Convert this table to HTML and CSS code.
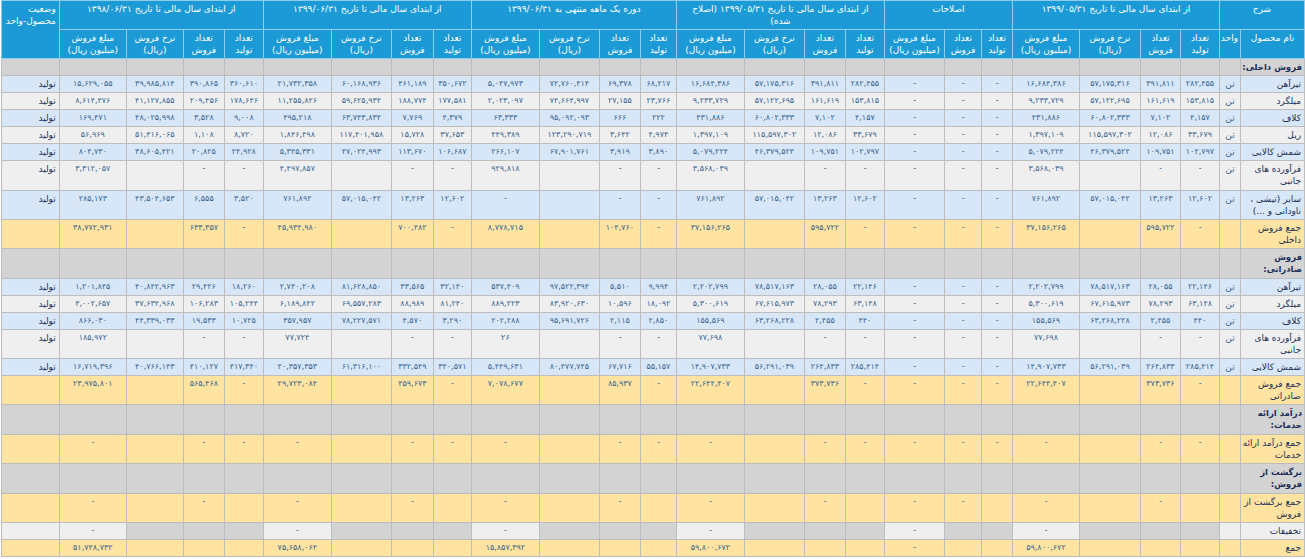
FILE: index.html
```html
<!DOCTYPE html>
<html lang="fa" dir="rtl">
<head>
<meta charset="utf-8">
<title>گزارش فعالیت ماهانه</title>
<link rel="stylesheet" href="styles.css">
</head>
<body>
<table class="tb">
<colgroup>
<col class="c64"><col class="c21">
<col class="c39"><col class="c40"><col class="c61"><col class="c67">
<col class="c31"><col class="c37"><col class="c60">
<col class="c39"><col class="c41"><col class="c60"><col class="c68">
<col class="c36"><col class="c41"><col class="c60"><col class="c68">
<col class="c38"><col class="c42"><col class="c60"><col class="c68">
<col class="c39"><col class="c41"><col class="c57"><col class="c67">
<col class="c58">
</colgroup>
<thead>
<tr class="h1">
<th colspan="2">شرح</th>
<th colspan="4">از ابتدای سال مالی تا تاریخ ۱۳۹۹/۰۵/۳۱</th>
<th colspan="3">اصلاحات</th>
<th colspan="4">از ابتدای سال مالی تا تاریخ ۱۳۹۹/۰۵/۳۱ (اصلاح<br>شده)</th>
<th colspan="4">دوره یک ماهه منتهی به ۱۳۹۹/۰۶/۳۱</th>
<th colspan="4">از ابتدای سال مالی تا تاریخ ۱۳۹۹/۰۶/۳۱</th>
<th colspan="4">از ابتدای سال مالی تا تاریخ ۱۳۹۸/۰۶/۳۱</th>
<th rowspan="2" class="hs">وضعیت<br>محصول-واحد</th>
</tr>
<tr class="h2">
<th>نام محصول</th><th>واحد</th>
<th>تعداد<br>تولید</th><th>تعداد<br>فروش</th><th>نرخ فروش<br>(ریال)</th><th>مبلغ فروش<br>(میلیون ریال)</th>
<th>تعداد<br>تولید</th><th>تعداد<br>فروش</th><th>مبلغ فروش<br>(میلیون ریال)</th>
<th>تعداد<br>تولید</th><th>تعداد<br>فروش</th><th>نرخ فروش<br>(ریال)</th><th>مبلغ فروش<br>(میلیون ریال)</th>
<th>تعداد<br>تولید</th><th>تعداد<br>فروش</th><th>نرخ فروش<br>(ریال)</th><th>مبلغ فروش<br>(میلیون ریال)</th>
<th>تعداد<br>تولید</th><th>تعداد<br>فروش</th><th>نرخ فروش<br>(ریال)</th><th>مبلغ فروش<br>(میلیون ریال)</th>
<th>تعداد<br>تولید</th><th>تعداد<br>فروش</th><th>نرخ فروش<br>(ریال)</th><th>مبلغ فروش<br>(میلیون ریال)</th>
</tr>
</thead>
<tbody>
<tr class="rs"><td class="nm sec">فروش داخلی:</td><td></td><td></td><td></td><td></td><td></td><td></td><td></td><td></td><td></td><td></td><td></td><td></td><td></td><td></td><td></td><td></td><td></td><td></td><td></td><td></td><td></td><td></td><td></td><td></td><td></td></tr>

<tr class="rb"><td class="nm">تیرآهن</td><td class="u">تن</td><td>۲۸۲,۴۵۵</td><td>۳۹۱,۸۱۱</td><td>۵۷,۱۷۵,۳۱۶</td><td>۱۶,۶۸۴,۳۸۶</td><td>-</td><td>-</td><td>-</td><td>۲۸۲,۴۵۵</td><td>۳۹۱,۸۱۱</td><td>۵۷,۱۷۵,۳۱۶</td><td>۱۶,۶۸۴,۳۸۶</td><td>۶۸,۲۱۷</td><td>۶۹,۳۷۸</td><td>۷۲,۷۶۰,۴۱۴</td><td>۵,۰۴۷,۹۷۳</td><td>۳۵۰,۶۷۲</td><td>۴۶۱,۱۸۹</td><td>۶۰,۱۶۸,۹۳۶</td><td>۲۱,۷۳۲,۳۵۸</td><td>۳۶۰,۶۱۰</td><td>۳۹۰,۸۶۵</td><td>۳۹,۹۸۵,۸۱۴</td><td>۱۵,۶۲۹,۰۵۵</td><td class="st">تولید</td></tr>

<tr class="rg"><td class="nm">میلگرد</td><td class="u">تن</td><td>۱۵۳,۸۱۵</td><td>۱۶۱,۶۱۹</td><td>۵۷,۱۲۲,۶۹۵</td><td>۹,۲۳۳,۷۲۹</td><td>-</td><td>-</td><td>-</td><td>۱۵۳,۸۱۵</td><td>۱۶۱,۶۱۹</td><td>۵۷,۱۲۲,۶۹۵</td><td>۹,۲۳۳,۷۲۹</td><td>۲۳,۷۶۶</td><td>۲۷,۱۵۵</td><td>۷۴,۶۶۴,۹۹۷</td><td>۲,۰۲۳,۰۹۷</td><td>۱۷۷,۵۸۱</td><td>۱۸۸,۷۷۴</td><td>۵۹,۶۲۵,۹۳۴</td><td>۱۱,۲۵۵,۸۲۶</td><td>۱۷۸,۶۴۶</td><td>۲۰۹,۴۵۶</td><td>۴۱,۱۲۷,۸۵۵</td><td>۸,۶۱۴,۴۷۶</td><td class="st">تولید</td></tr>

<tr class="rb"><td class="nm">کلاف</td><td class="u">تن</td><td>۴,۱۵۷</td><td>۷,۱۰۲</td><td>۶۰,۸۰۲,۳۳۳</td><td>۴۳۱,۸۸۶</td><td>-</td><td>-</td><td>-</td><td>۴,۱۵۷</td><td>۷,۱۰۲</td><td>۶۰,۸۰۲,۳۳۳</td><td>۴۳۱,۸۸۶</td><td>۲۲۲</td><td>۶۶۶</td><td>۹۵,۰۹۲,۰۹۳</td><td>۶۳,۳۳۳</td><td>۴,۳۷۹</td><td>۷,۷۶۹</td><td>۶۳,۷۴۳,۸۳۴</td><td>۴۹۵,۲۱۸</td><td>۹,۰۰۸</td><td>۳,۵۲۸</td><td>۴۸,۰۲۵,۹۹۸</td><td>۱۶۹,۴۷۱</td><td class="st">تولید</td></tr>

<tr class="rg"><td class="nm">ریل</td><td class="u">تن</td><td>۳۳,۶۷۹</td><td>۱۲,۰۸۶</td><td>۱۱۵,۵۹۷,۳۰۲</td><td>۱,۳۹۷,۱۰۹</td><td>-</td><td>-</td><td>-</td><td>۳۳,۶۷۹</td><td>۱۲,۰۸۶</td><td>۱۱۵,۵۹۷,۳۰۲</td><td>۱,۳۹۷,۱۰۹</td><td>۴,۹۷۴</td><td>۳,۶۴۲</td><td>۱۲۳,۲۹۰,۷۱۹</td><td>۴۴۹,۳۸۹</td><td>۳۷,۶۵۳</td><td>۱۵,۷۲۸</td><td>۱۱۷,۴۰۱,۹۵۸</td><td>۱,۸۴۶,۴۹۸</td><td>۸,۷۲۰</td><td>۱,۱۰۸</td><td>۵۱,۴۱۶,۰۶۵</td><td>۵۶,۹۶۹</td><td class="st">تولید</td></tr>

<tr class="rb"><td class="nm">شمش کالایی</td><td class="u">تن</td><td>۱۰۲,۷۹۷</td><td>۱۰۹,۷۵۱</td><td>۴۶,۳۷۹,۵۲۴</td><td>۵,۰۷۹,۲۲۴</td><td>-</td><td>-</td><td>-</td><td>۱۰۲,۷۹۷</td><td>۱۰۹,۷۵۱</td><td>۴۶,۳۷۹,۵۲۴</td><td>۵,۰۷۹,۲۲۴</td><td>۳,۸۹۰</td><td>۳,۹۱۹</td><td>۶۷,۹۰۱,۷۶۱</td><td>۲۶۶,۱۰۷</td><td>۱۰۶,۶۸۷</td><td>۱۱۳,۶۷۰</td><td>۴۷,۰۲۴,۹۹۳</td><td>۵,۳۴۵,۳۳۱</td><td>۲۴,۹۲۸</td><td>۲۰,۸۲۵</td><td>۳۸,۶۰۵,۴۲۱</td><td>۸۰۴,۷۳۰</td><td class="st">تولید</td></tr>

<tr class="rg tall"><td class="nm">فرآورده های<br>جانبی</td><td class="u">تن</td><td>-</td><td>-</td><td></td><td>۳,۵۶۸,۰۳۹</td><td>-</td><td>-</td><td>-</td><td>-</td><td>-</td><td></td><td>۳,۵۶۸,۰۳۹</td><td>-</td><td>-</td><td></td><td>۹۲۹,۸۱۸</td><td>-</td><td>-</td><td></td><td>۴,۴۹۷,۸۵۷</td><td>-</td><td>-</td><td></td><td>۳,۳۱۲,۰۵۷</td><td class="st">تولید</td></tr>

<tr class="rb"><td class="nm">سایر (تیشی ،<br>ناودانی و ...)</td><td class="u">تن</td><td>۱۲,۶۰۲</td><td>۱۳,۲۶۳</td><td>۵۷,۰۱۵,۰۴۲</td><td>۷۶۱,۸۹۲</td><td>-</td><td>-</td><td>-</td><td>۱۲,۶۰۲</td><td>۱۳,۲۶۳</td><td>۵۷,۰۱۵,۰۴۲</td><td>۷۶۱,۸۹۲</td><td>-</td><td>-</td><td></td><td>-</td><td>۱۲,۶۰۲</td><td>۱۳,۲۶۳</td><td>۵۷,۰۱۵,۰۴۲</td><td>۷۶۱,۸۹۲</td><td>۳,۵۲۰</td><td>۶,۵۵۵</td><td>۴۳,۵۰۴,۶۵۳</td><td>۲۸۵,۱۷۳</td><td class="st">تولید</td></tr>

<tr class="ry"><td class="nm">جمع فروش<br>داخلی</td><td></td><td>-</td><td>۵۹۵,۷۲۲</td><td></td><td>۳۷,۱۵۶,۲۶۵</td><td>-</td><td>-</td><td>-</td><td>-</td><td>۵۹۵,۷۲۲</td><td></td><td>۳۷,۱۵۶,۲۶۵</td><td>-</td><td>۱۰۴,۷۶۰</td><td></td><td>۸,۷۷۸,۷۱۵</td><td>-</td><td>۷۰۰,۴۸۲</td><td></td><td>۴۵,۹۳۴,۹۸۰</td><td>-</td><td>۶۳۳,۳۵۷</td><td></td><td>۳۸,۷۷۲,۹۳۱</td><td></td></tr>

<tr class="rs tall"><td class="nm sec">فروش<br>صادراتی:</td><td></td><td></td><td></td><td></td><td></td><td></td><td></td><td></td><td></td><td></td><td></td><td></td><td></td><td></td><td></td><td></td><td></td><td></td><td></td><td></td><td></td><td></td><td></td><td></td><td></td></tr>

<tr class="rb"><td class="nm">تیرآهن</td><td class="u">تن</td><td>۲۲,۱۴۶</td><td>۲۸,۰۵۵</td><td>۷۸,۵۱۷,۱۶۳</td><td>۲,۲۰۲,۷۹۹</td><td>-</td><td>-</td><td>-</td><td>۲۲,۱۴۶</td><td>۲۸,۰۵۵</td><td>۷۸,۵۱۷,۱۶۳</td><td>۲,۲۰۲,۷۹۹</td><td>۹,۹۹۴</td><td>۵,۵۱۰</td><td>۹۷,۵۲۲,۳۹۴</td><td>۵۳۷,۴۰۹</td><td>۳۲,۱۴۰</td><td>۳۳,۵۶۵</td><td>۸۱,۶۲۸,۸۵۰</td><td>۲,۷۴۰,۲۰۸</td><td>۱۸,۲۶۰</td><td>۲۹,۴۲۶</td><td>۴۰,۸۴۲,۹۶۳</td><td>۱,۲۰۱,۸۴۵</td><td class="st">تولید</td></tr>

<tr class="rg"><td class="nm">میلگرد</td><td class="u">تن</td><td>۶۳,۱۴۸</td><td>۷۸,۲۹۳</td><td>۶۷,۶۱۵,۹۷۳</td><td>۵,۳۰۰,۶۱۹</td><td>-</td><td>-</td><td>-</td><td>۶۳,۱۴۸</td><td>۷۸,۲۹۳</td><td>۶۷,۶۱۵,۹۷۳</td><td>۵,۳۰۰,۶۱۹</td><td>۱۸,۰۹۲</td><td>۱۰,۵۹۶</td><td>۸۳,۹۲۰,۶۳۰</td><td>۸۸۹,۲۲۳</td><td>۸۱,۲۴۰</td><td>۸۸,۹۸۹</td><td>۶۹,۵۵۷,۲۸۳</td><td>۶,۱۸۹,۸۴۲</td><td>۱۰۵,۲۴۴</td><td>۱۰۶,۲۸۳</td><td>۳۷,۶۳۴,۹۶۸</td><td>۴,۰۰۲,۶۵۷</td><td class="st">تولید</td></tr>

<tr class="rb"><td class="nm">کلاف</td><td class="u">تن</td><td>۴۴۰</td><td>۲,۴۵۵</td><td>۶۳,۲۶۸,۲۲۸</td><td>۱۵۵,۵۶۹</td><td>-</td><td>-</td><td>-</td><td>۴۴۰</td><td>۲,۴۵۵</td><td>۶۳,۲۶۸,۲۲۸</td><td>۱۵۵,۵۶۹</td><td>۲,۸۵۰</td><td>۲,۱۱۵</td><td>۹۵,۶۹۱,۷۲۶</td><td>۲۰۲,۲۸۸</td><td>۳,۲۹۰</td><td>۴,۵۷۰</td><td>۷۸,۲۲۷,۵۷۱</td><td>۳۵۷,۹۵۷</td><td>۱۰,۷۲۵</td><td>۱۹,۵۳۳</td><td>۴۴,۳۳۹,۰۳۳</td><td>۸۶۶,۰۳۰</td><td class="st">تولید</td></tr>

<tr class="rg"><td class="nm">فرآورده های<br>جانبی</td><td class="u">تن</td><td>-</td><td>-</td><td></td><td>۷۷,۶۹۸</td><td>-</td><td>-</td><td>-</td><td>-</td><td>-</td><td></td><td>۷۷,۶۹۸</td><td>-</td><td>-</td><td></td><td>۲۶</td><td>-</td><td>-</td><td></td><td>۷۷,۷۲۴</td><td>-</td><td>-</td><td></td><td>۱۸۵,۹۷۲</td><td class="st">تولید</td></tr>

<tr class="rb"><td class="nm">شمش کالایی</td><td class="u">تن</td><td>۲۸۵,۴۱۴</td><td>۲۶۴,۸۳۳</td><td>۵۶,۲۹۱,۰۳۹</td><td>۱۴,۹۰۷,۷۳۳</td><td>-</td><td>-</td><td>-</td><td>۲۸۵,۴۱۴</td><td>۲۶۴,۸۳۳</td><td>۵۶,۲۹۱,۰۳۹</td><td>۱۴,۹۰۷,۷۳۳</td><td>۵۵,۱۵۷</td><td>۶۷,۷۱۶</td><td>۸۰,۴۷۷,۷۴۵</td><td>۵,۴۴۹,۶۳۱</td><td>۳۴۰,۵۷۱</td><td>۳۳۲,۵۴۹</td><td>۶۱,۳۱۶,۱۰۰</td><td>۲۰,۳۵۷,۳۵۳</td><td>۴۱۷,۳۴۰</td><td>۴۱۰,۱۲۷</td><td>۴۰,۷۶۶,۱۴۳</td><td>۱۶,۷۱۹,۳۹۶</td><td class="st">تولید</td></tr>

<tr class="ry"><td class="nm">جمع فروش<br>صادراتی</td><td></td><td>-</td><td>۳۷۳,۷۳۶</td><td></td><td>۲۲,۶۴۴,۴۰۷</td><td>-</td><td>-</td><td>-</td><td>-</td><td>۳۷۳,۷۳۶</td><td></td><td>۲۲,۶۴۴,۴۰۷</td><td>-</td><td>۸۵,۹۳۷</td><td></td><td>۷,۰۷۸,۶۷۷</td><td>-</td><td>۴۵۹,۶۷۳</td><td></td><td>۲۹,۷۲۳,۰۸۴</td><td>-</td><td>۵۶۵,۴۶۸</td><td></td><td>۲۳,۹۷۵,۸۰۱</td><td></td></tr>

<tr class="rs tall"><td class="nm sec">درآمد ارائه<br>خدمات:</td><td></td><td></td><td></td><td></td><td></td><td></td><td></td><td></td><td></td><td></td><td></td><td></td><td></td><td></td><td></td><td></td><td></td><td></td><td></td><td></td><td></td><td></td><td></td><td></td><td></td></tr>

<tr class="ry"><td class="nm">جمع درآمد ارائه<br>خدمات</td><td></td><td>-</td><td>-</td><td></td><td>-</td><td>-</td><td>-</td><td>-</td><td>-</td><td>-</td><td></td><td>-</td><td>-</td><td>-</td><td></td><td>-</td><td>-</td><td>-</td><td></td><td>-</td><td>-</td><td>-</td><td></td><td>-</td><td></td></tr>

<tr class="rs tall"><td class="nm sec">برگشت از<br>فروش:</td><td></td><td></td><td></td><td></td><td></td><td></td><td></td><td></td><td></td><td></td><td></td><td></td><td></td><td></td><td></td><td></td><td></td><td></td><td></td><td></td><td></td><td></td><td></td><td></td><td></td></tr>

<tr class="ry"><td class="nm">جمع برگشت از<br>فروش</td><td></td><td></td><td>-</td><td></td><td>-</td><td></td><td>-</td><td>-</td><td></td><td>-</td><td></td><td>-</td><td></td><td>-</td><td></td><td>-</td><td></td><td>-</td><td></td><td>-</td><td></td><td>-</td><td></td><td>-</td><td></td></tr>

<tr class="rt"><td class="nm w">تخفیفات</td><td class="w"></td><td></td><td></td><td></td><td class="w">-</td><td></td><td></td><td class="w">-</td><td></td><td></td><td></td><td class="w">-</td><td></td><td></td><td></td><td class="w">-</td><td></td><td></td><td></td><td class="w">-</td><td></td><td></td><td></td><td class="w">-</td><td class="w"></td></tr>

<tr class="ry"><td class="nm">جمع</td><td></td><td></td><td></td><td></td><td>۵۹,۸۰۰,۶۷۲</td><td></td><td></td><td>-</td><td></td><td></td><td></td><td>۵۹,۸۰۰,۶۷۲</td><td></td><td></td><td></td><td>۱۵,۸۵۷,۳۹۲</td><td></td><td></td><td></td><td>۷۵,۶۵۸,۰۶۴</td><td></td><td></td><td></td><td>۵۱,۷۴۸,۷۳۲</td><td></td></tr>
</tbody>
</table>
</body>
</html>
```

FILE: styles.css
```css
html, body {
  margin: 0;
  padding: 0;
  background: #ffffff;
}

body {
  font-family: Tahoma, "DejaVu Sans", sans-serif;
}

.tb {
  direction: rtl;
  border-collapse: collapse;
  table-layout: fixed;
  width: 1304px;
}

.c21 { width: 21px; }
.c31 { width: 31px; }
.c36 { width: 36px; }
.c37 { width: 37px; }
.c38 { width: 38px; }
.c39 { width: 39px; }
.c40 { width: 40px; }
.c41 { width: 41px; }
.c42 { width: 42px; }
.c57 { width: 57px; }
.c58 { width: 58px; }
.c60 { width: 60px; }
.c61 { width: 61px; }
.c64 { width: 64px; }
.c67 { width: 67px; }
.c68 { width: 68px; }

.tb th {
  background: #1b9ad6;
  color: #ffffff;
  font-weight: normal;
  font-size: 9px;
  line-height: 12px;
  padding: 2px 2px;
  border: 1px solid #8fcdec;
  text-align: center;
  vertical-align: top;
  overflow: hidden;
}

.tb th.hs {
  text-align: right;
  padding-right: 3px;
}

.tb td {
  border: 1px solid #bdbdbd;
  font-size: 8px;
  letter-spacing: -0.35px;
  line-height: 12px;
  padding: 2px 2px;
  color: #3b6690;
  text-align: center;
  vertical-align: top;
  white-space: nowrap;
  overflow: hidden;
}

.tb td.nm {
  text-align: right;
  font-size: 9px;
  letter-spacing: 0;
  color: #1d2f57;
  padding-right: 3px;
}

.tb td.sec {
  font-weight: bold;
  font-size: 8.5px;
  letter-spacing: -0.2px;
  padding-right: 2px;
  color: #1d2f57;
}

.tb td.u {
  font-size: 9px;
  letter-spacing: 0;
}

.tb td.st {
  text-align: right;
  font-size: 9px;
  letter-spacing: 0;
  color: #1d2f57;
  padding-right: 3px;
}

.tb tr.tall td {
  padding-bottom: 3px;
}

.rb td { background: #d7e7f8; }
.rg td { background: #efefef; }
.rs td { background: #d3d3d3; }
.ry td { background: #fee3a1; }
.rt td { background: #d3d3d3; }
.rt td.w { background: #efefef; }
```
